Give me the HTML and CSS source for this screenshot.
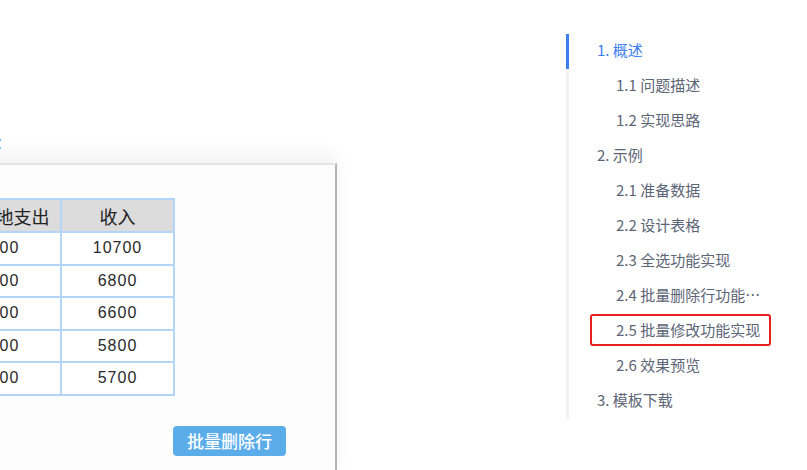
FILE: index.html
```html
<!DOCTYPE html>
<html lang="zh-CN">
<head>
  <meta charset="UTF-8">
  <title>批量修改功能实现</title>
  <link rel="stylesheet" href="styles.css">
</head>
<body>
  <div class="page">
    <div class="article">
      <p class="caption"><span class="caption-text">效果如下:</span></p>

      <div class="shot">
        <table class="grid">
          <thead>
            <tr><th>宿营地支出</th><th>收入</th></tr>
          </thead>
          <tbody>
            <tr><td>3200</td><td>10700</td></tr>
            <tr><td>2100</td><td>6800</td></tr>
            <tr><td>1400</td><td>6600</td></tr>
            <tr><td>1500</td><td>5800</td></tr>
            <tr><td>1300</td><td>5700</td></tr>
          </tbody>
        </table>
        <div class="actions">
          <button class="btn">批量删除行</button>
        </div>
      </div>
    </div>

    <ul class="toc">
      <li class="toc-item active">1. 概述</li>
      <li class="toc-item sub">1.1 问题描述</li>
      <li class="toc-item sub">1.2 实现思路</li>
      <li class="toc-item">2. 示例</li>
      <li class="toc-item sub">2.1 准备数据</li>
      <li class="toc-item sub">2.2 设计表格</li>
      <li class="toc-item sub">2.3 全选功能实现</li>
      <li class="toc-item sub">2.4 批量删除行功能实现</li>
      <li class="toc-item sub marked">2.5 批量修改功能实现</li>
      <li class="toc-item sub">2.6 效果预览</li>
      <li class="toc-item">3. 模板下载</li>
    </ul>
  </div>
</body>
</html>
```

FILE: styles.css
```css
body {
  margin: 0;
  background: #fff;
  font-family: "Noto Sans CJK SC", "Liberation Sans", sans-serif;
  color: #333;
  overflow: hidden;
}
.page {
  display: flex;
  align-items: flex-start;
}
.article {
  width: 566px;
  flex-shrink: 0;
  overflow: hidden;
  height: 470px;
}
.caption {
  margin: 131px 0 0 0;
  height: 24px;
  line-height: 24px;
  font-family: "Liberation Sans", sans-serif;
  font-size: 18px;
  color: #3a55c8;
  white-space: nowrap;
  direction: rtl;
  width: 2px;
  overflow: hidden;
}
.caption-text {
  direction: ltr;
  unicode-bidi: embed;
}
.shot {
  margin: 8px 0 0 -100px;
  width: 437px;
  box-sizing: border-box;
  min-height: 320px;
  padding: 33px 0 0 47px;
  background: #fdfdfd;
  border-top: 2px solid #e4e5e8;
  border-right: 2px solid #b4b4b4;
  box-shadow: 0 -10px 16px rgba(0, 0, 0, 0.05);
}
.grid {
  border-collapse: collapse;
  table-layout: fixed;
}
.grid th,
.grid td {
  width: 111px;
  border: 2px solid #b3d6f8;
  text-align: center;
  padding: 0;
}
.grid th {
  height: 31px;
  background: #dcdcdc;
  font-weight: normal;
  font-size: 18px;
  color: #222;
}
.grid td {
  height: 30.5px;
  background: #fff;
  font-family: "Liberation Sans", sans-serif;
  font-size: 16px;
  letter-spacing: 1px;
  color: #2a2a2a;
}
.grid td:first-child {
  width: 101px;
  padding-right: 10px;
}
.actions {
  margin-top: 30px;
  padding-left: 226px;
}
.btn {
  width: 113px;
  height: 30px;
  border: none;
  border-radius: 4px;
  background: #5badea;
  color: #fff;
  font-family: "Noto Sans CJK SC", sans-serif;
  font-size: 17px;
  font-weight: 500;
  padding: 0;
  line-height: 30px;
}
.toc {
  list-style: none;
  margin: 34px 0 0 0;
  padding: 0;
  width: 198px;
  border-left: 3px solid #f2f2f2;
}
.toc-item {
  position: relative;
  height: 35px;
  line-height: 32px;
  padding-left: 28px;
  margin-left: -3px;
  border-left: 3px solid transparent;
  font-size: 15px;
  color: #5c6576;
  white-space: nowrap;
  overflow: hidden;
  text-overflow: ellipsis;
}
.toc-item.sub {
  padding-left: 47px;
}
.toc-item.active {
  color: #3d7ef2;
  border-left-color: #3a80ef;
}
.toc-item.marked {
  overflow: visible;
}
.toc-item.marked::after {
  content: "";
  position: absolute;
  left: 21px;
  top: 0;
  width: 181px;
  height: 32px;
  box-sizing: border-box;
  border: 2px solid #e8201d;
  border-radius: 3px;
}
```
